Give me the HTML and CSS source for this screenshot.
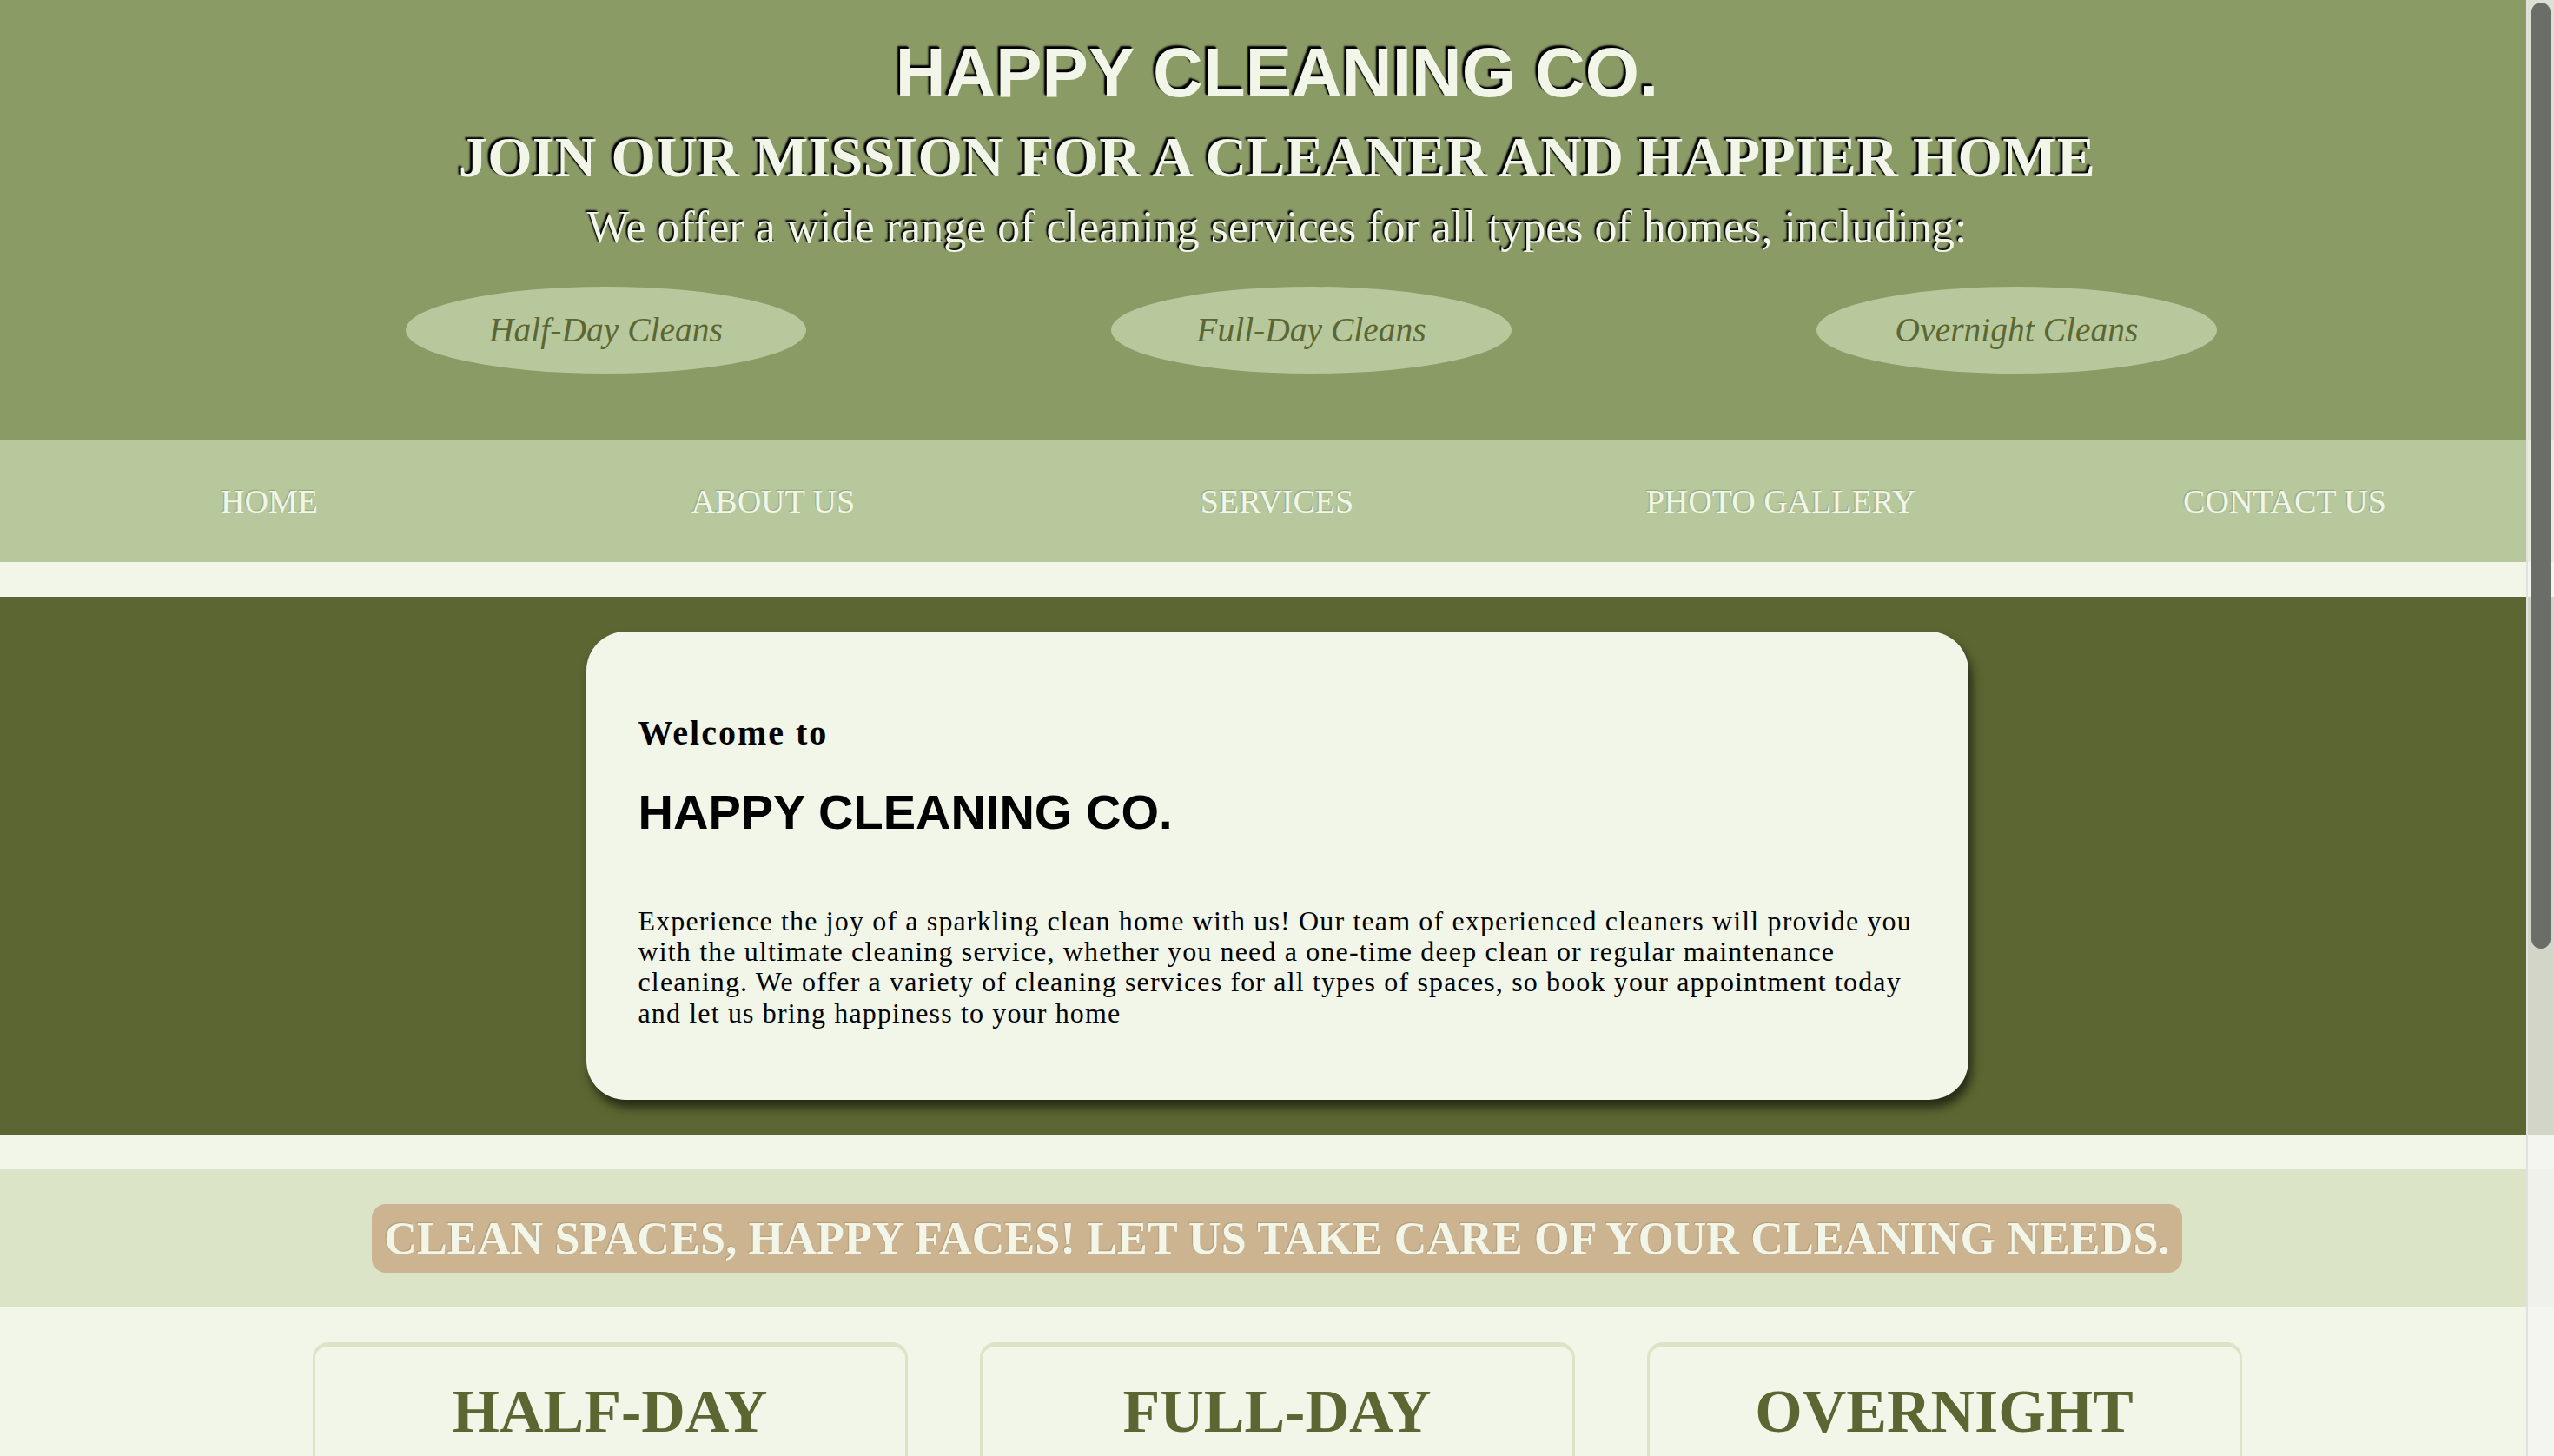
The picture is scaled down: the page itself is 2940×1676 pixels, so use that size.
FILE: index.html
```html
<!DOCTYPE html>
<html lang="en">
<head>
<meta charset="utf-8">
<title>Happy Cleaning Co.</title>
<link rel="stylesheet" href="styles.css">
</head>
<body>
<header class="site-header">
  <h1 class="brand">HAPPY CLEANING CO.</h1>
  <h2 class="mission">JOIN OUR MISSION FOR A CLEANER AND HAPPIER HOME</h2>
  <p class="offer">We offer a wide range of cleaning services for all types of homes, including:</p>
  <ul class="service-list">
    <li class="service-pill">Half-Day Cleans</li>
    <li class="service-pill">Full-Day Cleans</li>
    <li class="service-pill">Overnight Cleans</li>
  </ul>
</header>

<nav class="main-nav">
  <a class="nav-link" href="#">HOME</a>
  <a class="nav-link" href="#">ABOUT US</a>
  <a class="nav-link" href="#">SERVICES</a>
  <a class="nav-link" href="#">PHOTO GALLERY</a>
  <a class="nav-link" href="#">CONTACT US</a>
</nav>

<section class="welcome">
  <div class="welcome-card">
    <h3 class="welcome-kicker">Welcome to</h3>
    <h2 class="welcome-title">HAPPY CLEANING CO.</h2>
    <p class="welcome-text">Experience the joy of a sparkling clean home with us! Our team of experienced cleaners will provide you with the ultimate cleaning service, whether you need a one-time deep clean or regular maintenance cleaning. We offer a variety of cleaning services for all types of spaces, so book your appointment today and let us bring happiness to your home</p>
  </div>
</section>

<section class="slogan">
  <p class="slogan-pill">CLEAN SPACES, HAPPY FACES! LET US TAKE CARE OF YOUR CLEANING NEEDS.</p>
</section>

<section class="packages">
  <article class="package">
    <h2 class="package-title">HALF-DAY</h2>
    <p class="package-text">Up to four hours of focused cleaning for kitchens, bathrooms and living spaces.</p>
  </article>
  <article class="package">
    <h2 class="package-title">FULL-DAY</h2>
    <p class="package-text">A complete top-to-bottom clean of your whole home in a single day.</p>
  </article>
  <article class="package">
    <h2 class="package-title">OVERNIGHT</h2>
    <p class="package-text">Our team works while you rest, so you wake up to a sparkling home.</p>
  </article>
</section>

<div class="scrollbar" aria-hidden="true"><div class="scrollbar-thumb"></div></div>
</body>
</html>
```

FILE: styles.css
```css
html {
  scrollbar-width: none;
}
html::-webkit-scrollbar {
  display: none;
}

body {
  margin: 0;
  background: #f2f6e9;
  font-family: "Liberation Serif", "Times New Roman", serif;
  overflow-x: hidden;
}

/* ---------- header ---------- */
.site-header {
  background: #8b9b66;
  display: flex;
  flex-direction: column;
  align-items: center;
  text-align: center;
  padding: 39px 0 76px;
  color: #f2f6e9;
}

.brand {
  margin: 0;
  font-family: "Liberation Sans", Arial, sans-serif;
  font-weight: 700;
  font-size: 80px;
  line-height: 90px;
  text-shadow: -3px -3px 2px #000, -2px -2px 1px #000;
}

.mission {
  margin: 16px 0 0;
  font-weight: 700;
  font-size: 66px;
  line-height: 72px;
  letter-spacing: 0.3px;
  text-shadow: -3px -2px 2px #000, -2px -1px 1px #000;
}

.offer {
  margin: 15px 0 0;
  font-size: 52px;
  line-height: 60px;
  text-shadow: -2px -2px 2px #000, -1px -1px 1px #000;
}

.service-list {
  list-style: none;
  margin: 38px 0 0;
  padding: 0 0 0 467px;
  align-self: stretch;
  display: flex;
  gap: 351px;
}

.service-pill {
  width: 461px;
  height: 100px;
  border-radius: 50%;
  background: #b7c89d;
  color: #5c6632;
  font-style: italic;
  font-size: 39.5px;
  display: flex;
  align-items: center;
  justify-content: center;
}

/* ---------- nav ---------- */
.main-nav {
  background: #b7c89d;
  height: 141px;
  padding: 0 20px;
  display: grid;
  grid-template-columns: repeat(5, 1fr);
  align-items: center;
  margin-bottom: 40px;
}

.nav-link {
  text-align: center;
  color: #f2f6e9;
  text-decoration: none;
  font-size: 38px;
  text-shadow: -1px -1px 1px rgba(90, 100, 60, 0.35);
}

/* ---------- welcome ---------- */
.welcome {
  background: #5c6632;
  padding: 40px 0;
  display: flex;
  justify-content: center;
}

.welcome-card {
  width: 1591px;
  box-sizing: border-box;
  background: #f2f6e9;
  border-radius: 45px;
  padding: 93px 60px 82px;
  box-shadow: 4px 9px 12px rgba(0, 0, 0, 0.6);
  color: #000;
}

.welcome-kicker {
  margin: 0;
  font-weight: 700;
  font-size: 40px;
  line-height: 48px;
  letter-spacing: 2px;
}

.welcome-title {
  margin: 35px 0 0;
  font-family: "Liberation Sans", Arial, sans-serif;
  font-weight: 700;
  font-size: 56px;
  line-height: 64px;
}

.welcome-text {
  margin: 76px 0 0;
  font-size: 32px;
  line-height: 35.2px;
  letter-spacing: 1.15px;
}

/* ---------- slogan ---------- */
.slogan {
  margin-top: 40px;
  background: #dce4c8;
  padding: 40px 0 39px;
  display: flex;
  justify-content: center;
}

.slogan-pill {
  margin: 0;
  background: #cdb491;
  border-radius: 16px;
  padding: 0 14px;
  color: #f2f6e9;
  font-weight: 700;
  font-size: 52px;
  line-height: 79px;
  letter-spacing: 0.2px;
  white-space: nowrap;
  text-shadow: -1px -1px 1px rgba(120, 95, 60, 0.3);
}

/* ---------- packages ---------- */
.packages {
  padding: 41px 0 120px;
  display: flex;
  justify-content: center;
  gap: 83px;
}

.package {
  width: 685px;
  box-sizing: border-box;
  border: 3px solid #dce4c8;
  border-top-width: 5px;
  border-radius: 18px 18px 0 0;
  padding: 35px 40px 60px;
  text-align: center;
  min-height: 820px;
}

.package-title {
  margin: 0;
  color: #5c6632;
  font-weight: 700;
  font-size: 70px;
  line-height: 80px;
}

.package-text {
  margin: 40px 0 0;
  font-size: 32px;
  line-height: 40px;
  color: #333;
}

/* ---------- overlay scrollbar ---------- */
.scrollbar {
  position: fixed;
  top: 0;
  right: 0;
  width: 30px;
  height: 100vh;
  border-left: 2px solid #e1e1de;
  background: rgba(245, 245, 243, 0.78);
}

.scrollbar-thumb {
  position: absolute;
  top: 3px;
  left: 4px;
  width: 22px;
  height: 1089px;
  border-radius: 11px;
  background: #6b6d68;
}
```
